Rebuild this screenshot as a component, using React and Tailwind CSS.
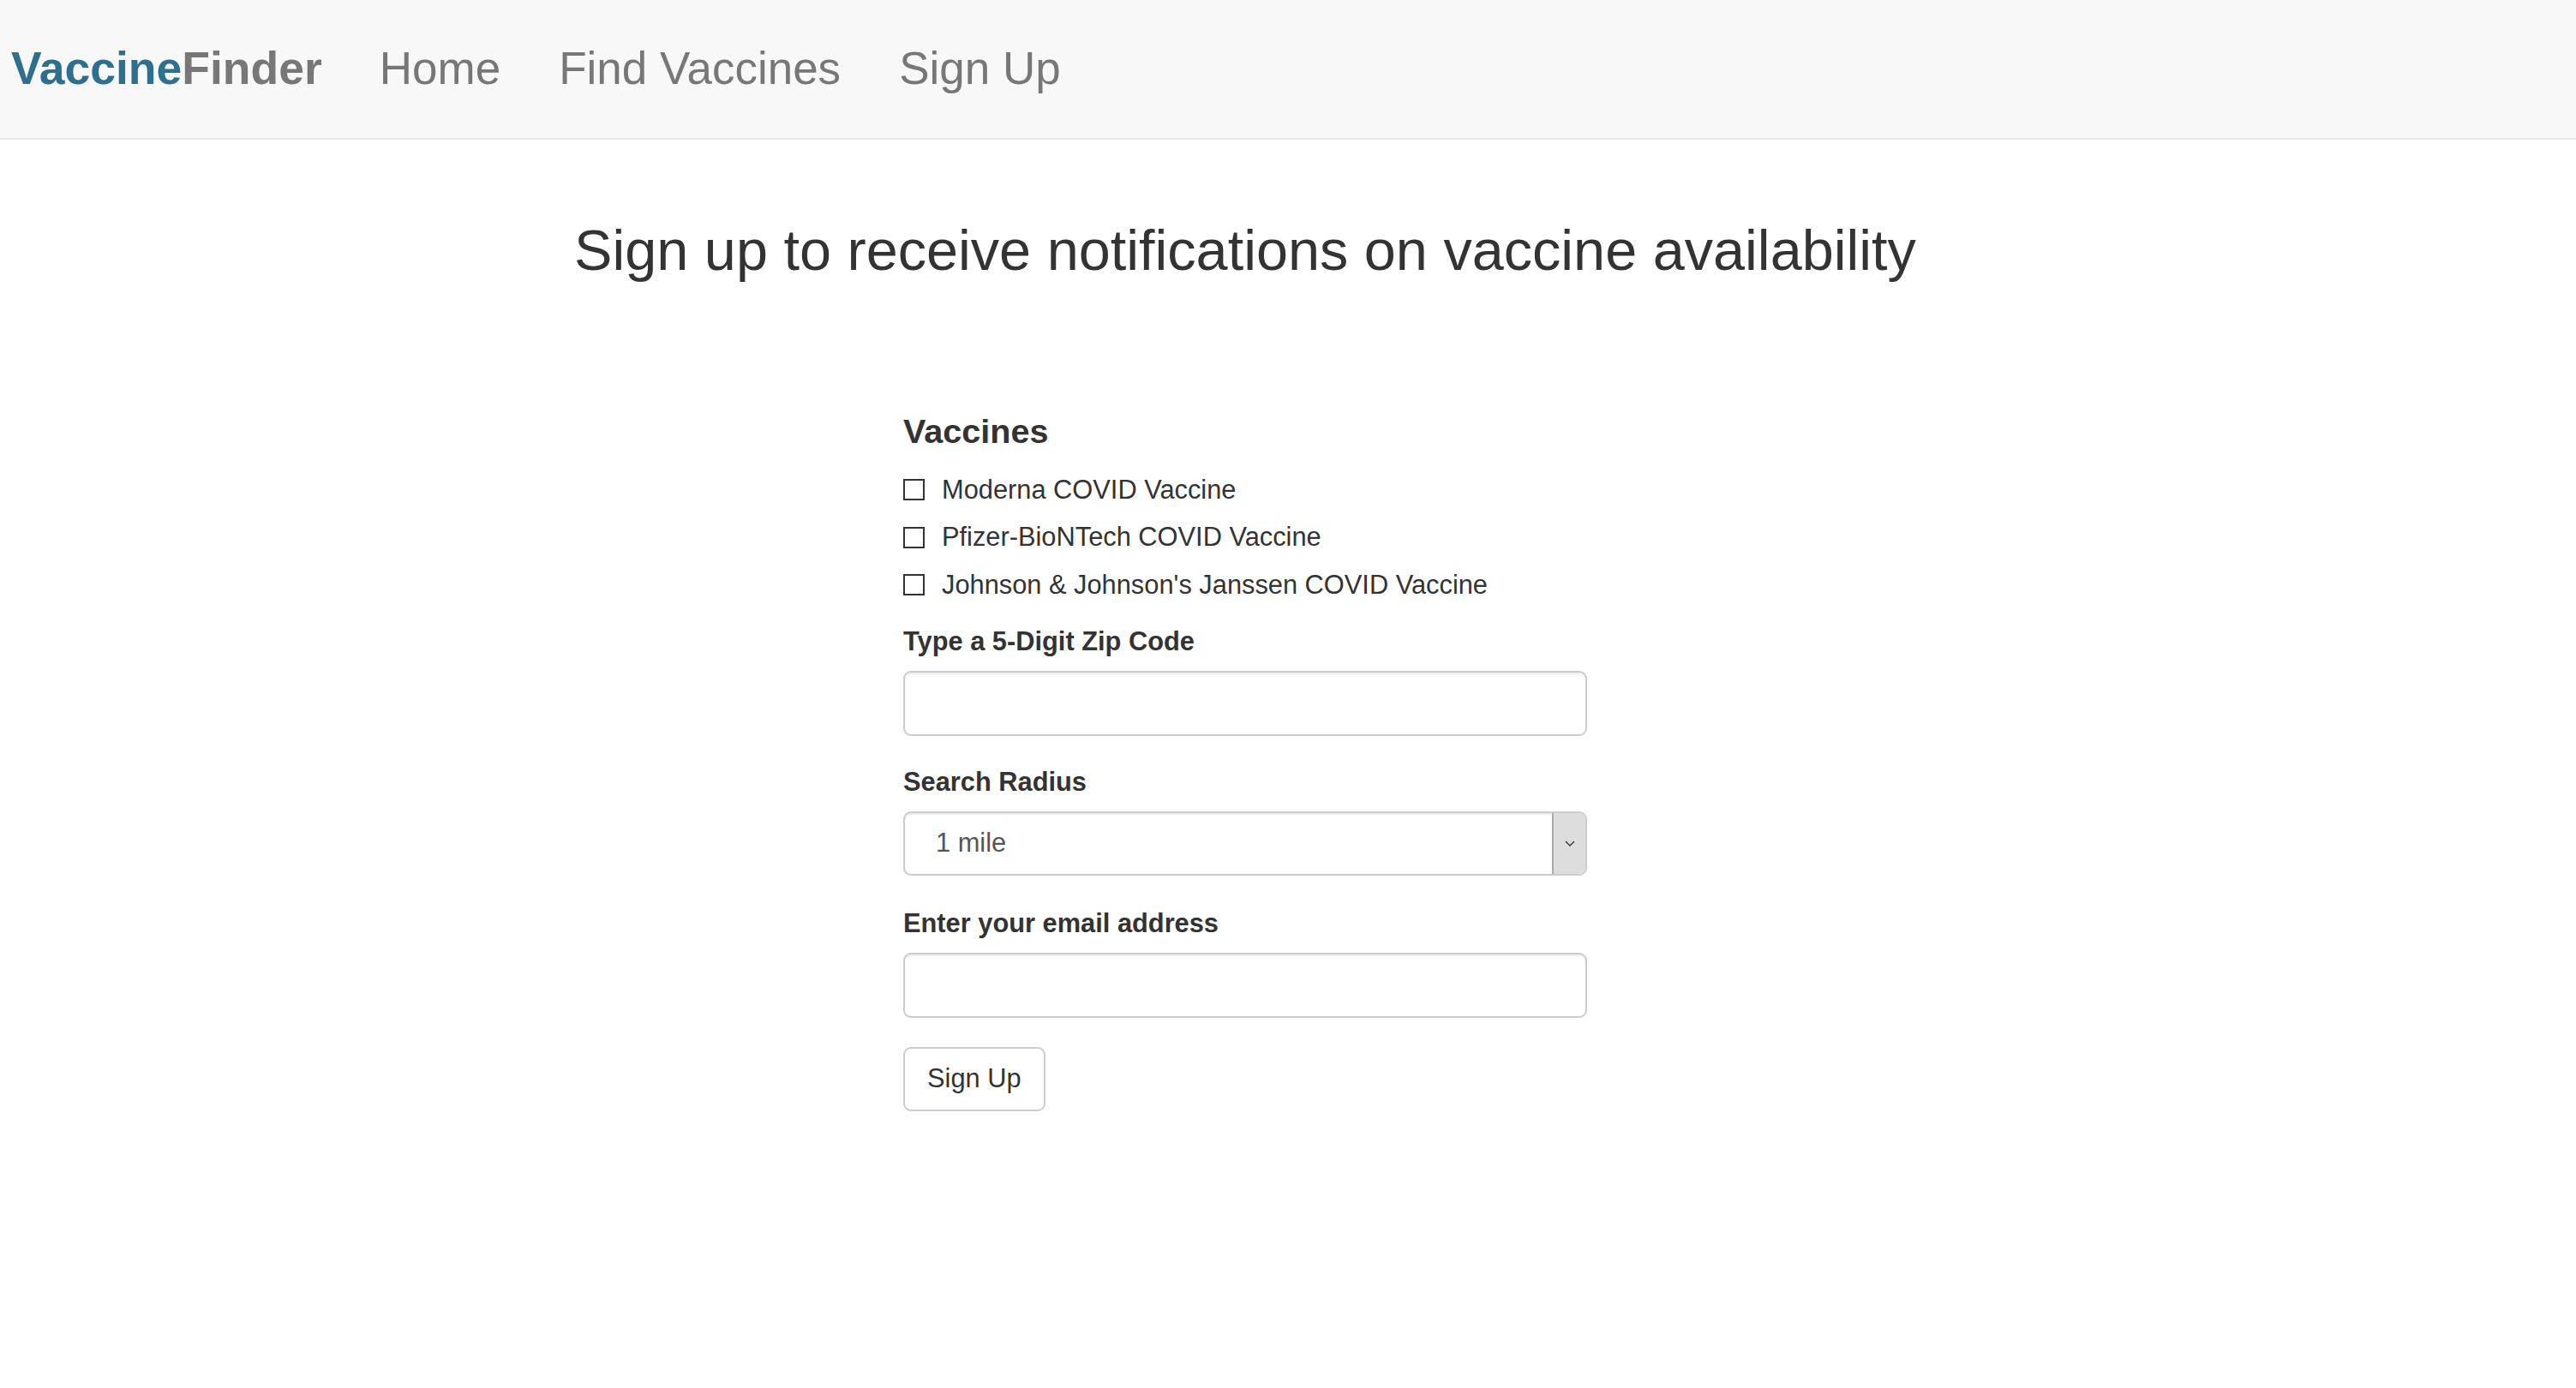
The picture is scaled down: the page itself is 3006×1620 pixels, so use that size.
import React, { useState } from 'react';

const vaccines = [
  { id: 'moderna', label: 'Moderna COVID Vaccine' },
  { id: 'pfizer', label: 'Pfizer-BioNTech COVID Vaccine' },
  { id: 'janssen', label: "Johnson & Johnson's Janssen COVID Vaccine" },
];

const NavBar = () => (
  <nav className="h-[163px] bg-[#f8f8f8] border-b-2 border-[#e7e7e7] flex items-center pb-[2px] pl-[13px] text-[53px] leading-none">
    <a href="#" className="font-bold text-[53.5px] mr-[67px]">
      <span className="text-[#2e6f8e]">Vaccine</span>
      <span className="text-[#777777]">Finder</span>
    </a>
    <div className="flex gap-[68px] text-[#777777]">
      <a href="#">Home</a>
      <a href="#">Find Vaccines</a>
      <a href="#">Sign Up</a>
    </div>
  </nav>
);

const Label = ({ children, htmlFor }) => (
  <label htmlFor={htmlFor} className="block h-[44px] leading-[44px] mb-[12px] font-bold text-[30.8px] text-[#333333]">
    {children}
  </label>
);

const TextInput = ({ id, type = 'text', value, onChange }) => (
  <input
    id={id}
    type={type}
    value={value}
    onChange={e => onChange(e.target.value)}
    className="block w-full h-[76px] px-[26px] border-2 border-[#cccccc] rounded-[9px] bg-white text-[30.8px] text-[#555555] shadow-[inset_0_2px_2px_rgba(0,0,0,0.075)] outline-none"
  />
);

const App = () => {
  const [checked, setChecked] = useState({});
  const [zip, setZip] = useState('');
  const [email, setEmail] = useState('');

  return (
    <div className="min-h-screen bg-white text-[#333333] font-['Liberation_Sans',Arial,sans-serif]">
      <NavBar />
      <main className="flex flex-col items-center pr-[100px]">
        <h2 className="mt-[93px] text-[66.6px] leading-[1.1] text-center text-[#333333]">
          Sign up to receive notifications on vaccine availability
        </h2>

        <form className="w-[798px] mt-[153px]" onSubmit={e => e.preventDefault()}>
          <h4 className="font-bold text-[39.6px] leading-[1.1] mb-[24px]">Vaccines</h4>

          <div className="flex flex-col gap-[11.5px] mb-[22px]">
            {vaccines.map(v => (
              <label key={v.id} className="flex items-center h-[44px] text-[30.8px] cursor-pointer">
                <span
                  className="w-[25px] h-[25px] border-2 border-[#333333] bg-white mr-[20px] flex items-center justify-center"
                  onClick={() => setChecked(c => ({ ...c, [v.id]: !c[v.id] }))}
                >
                  {checked[v.id] && <span className="text-[20px] leading-none">✓</span>}
                </span>
                <span>{v.label}</span>
              </label>
            ))}
          </div>

          <div className="mb-[32px]">
            <Label htmlFor="zip">Type a 5-Digit Zip Code</Label>
            <TextInput id="zip" value={zip} onChange={setZip} />
          </div>

          <div className="mb-[34px]">
            <Label htmlFor="radius">Search Radius</Label>
            <div className="flex h-[75px] border-2 border-[#cccccc] rounded-[9px] overflow-hidden shadow-[inset_0_2px_2px_rgba(0,0,0,0.075)]">
              <div className="flex-1 flex items-center pl-[36px] text-[30.8px] text-[#555555]">1 mile</div>
              <div className="w-[39px] bg-[#dddddd] border-l-2 border-[#aaaaaa] flex items-center justify-center">
                <svg width="14" height="9" viewBox="0 0 14 9">
                  <path d="M2 2 L7 7 L12 2" fill="none" stroke="#333" strokeWidth="1.4" />
                </svg>
              </div>
            </div>
          </div>

          <div className="mb-[34px]">
            <Label htmlFor="email">Enter your email address</Label>
            <TextInput id="email" type="email" value={email} onChange={setEmail} />
          </div>

          <button
            type="submit"
            className="h-[75px] px-[26px] border-2 border-[#cccccc] rounded-[9px] bg-white text-[30.8px] text-[#333333]"
          >
            Sign Up
          </button>
        </form>
      </main>
    </div>
  );
};

export default App;
